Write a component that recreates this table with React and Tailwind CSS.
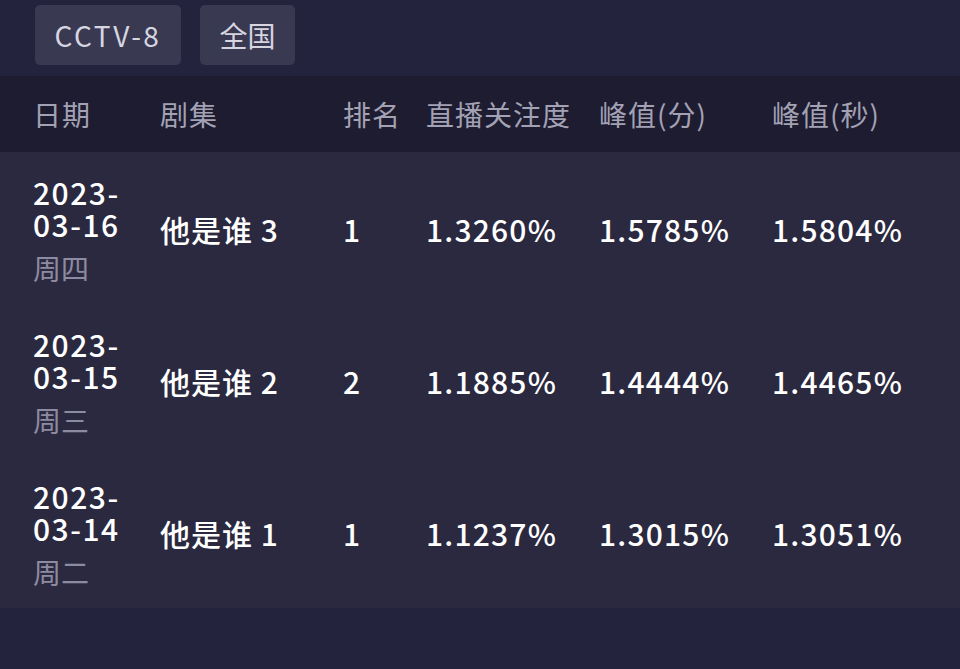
import React from "react";

const rows = [
  { d1: "2023-", d2: "03-16", wd: "周四", ep: "他是谁 3", rank: "1", a: "1.3260%", b: "1.5785%", c: "1.5804%" },
  { d1: "2023-", d2: "03-15", wd: "周三", ep: "他是谁 2", rank: "2", a: "1.1885%", b: "1.4444%", c: "1.4465%" },
  { d1: "2023-", d2: "03-14", wd: "周二", ep: "他是谁 1", rank: "1", a: "1.1237%", b: "1.3015%", c: "1.3051%" },
];

const cols = "grid grid-cols-[127px_183px_83px_173px_173px_1fr] pl-[33px]";

export default function App() {
  return (
    <div
      className="w-[960px] h-[669px] overflow-hidden bg-[#24233e] flex flex-col"
      style={{ fontFamily: '"Noto Sans CJK SC", "Noto Sans", sans-serif' }}
    >
      <div className="h-[76px] pt-[5px] pl-[35px] flex gap-[19px]">
        <div className="h-[60px] w-[146px] rounded-[5px] bg-[#3a3952] flex items-center justify-center text-[28px] tracking-[2.5px] text-[#d6d5e0]">
          CCTV-8
        </div>
        <div className="h-[60px] w-[95px] rounded-[5px] bg-[#3a3952] flex items-center justify-center text-[28px] text-[#d6d5e0]">
          全国
        </div>
      </div>
      <div className={`${cols} h-[76px] items-center bg-[#1e1c31] text-[28px] tracking-[1px] text-[#a3a2b4]`}>
        <div>日期</div>
        <div>剧集</div>
        <div>排名</div>
        <div>直播关注度</div>
        <div>峰值(分)</div>
        <div>峰值(秒)</div>
      </div>
      <div className="bg-[#2b293f]">
        {rows.map((r, i) => (
          <div key={i} className={`${cols} h-[152px] items-center text-white text-[30px] font-medium`}>
            <div className="flex flex-col pt-[4px]">
              <div className="leading-[32px] text-[30px] tracking-[1.5px]">
                {r.d1}
                <br />
                {r.d2}
              </div>
              <div className="mt-[12px] leading-[32px] text-[28px] font-normal text-[#8d8ba1]">{r.wd}</div>
            </div>
            <div className="pt-[2px] tracking-[1px]">{r.ep}</div>
            <div className="pt-[2px]">{r.rank}</div>
            <div className="pt-[2px] tracking-[1.2px]">{r.a}</div>
            <div className="pt-[2px] tracking-[1.2px]">{r.b}</div>
            <div className="pt-[2px] tracking-[1.2px]">{r.c}</div>
          </div>
        ))}
      </div>
      <div className="flex-1 bg-[#24233e]" />
    </div>
  );
}
